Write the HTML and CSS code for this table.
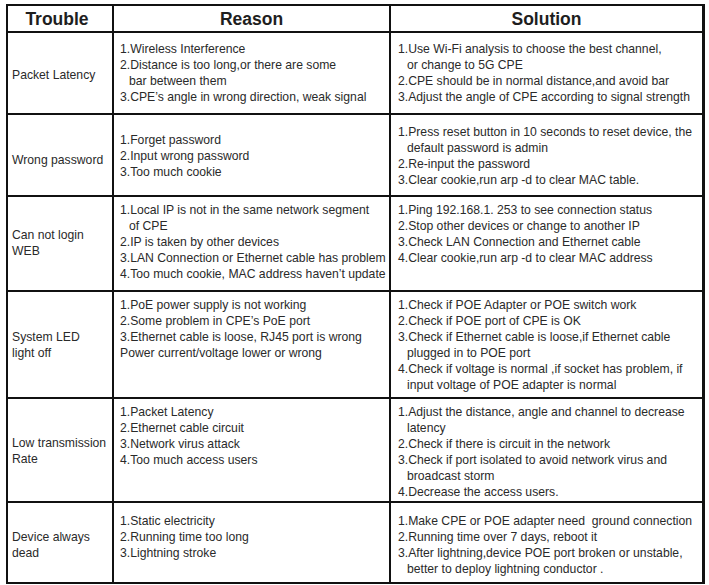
FILE: index.html
```html
<!DOCTYPE html>
<html>
<head>
<meta charset="utf-8">
<link rel="stylesheet" href="styles.css">
</head>
<body>
<div class="table">
  <div class="cell head head-first">Trouble</div>
  <div class="cell head">Reason</div>
  <div class="cell head">Solution</div>

  <div class="cell trouble t1">Packet Latency</div>
  <div class="cell text r1 c2">
    <div>1.Wireless Interference</div>
    <div>2.Distance is too long,or there are some</div>
    <div class="ind">bar between them</div>
    <div>3.CPE’s angle in wrong direction, weak signal</div>
  </div>
  <div class="cell text r1 c3">
    <div>1.Use Wi-Fi analysis to choose the best channel,</div>
    <div class="ind">or change to 5G CPE</div>
    <div>2.CPE should be in normal distance,and avoid bar</div>
    <div>3.Adjust the angle of CPE according to signal strength</div>
  </div>

  <div class="cell trouble t2">Wrong password</div>
  <div class="cell text mid c2">
    <div>1.Forget password</div>
    <div>2.Input wrong password</div>
    <div>3.Too much cookie</div>
  </div>
  <div class="cell text r2 c3">
    <div>1.Press reset button in 10 seconds to reset device, the</div>
    <div class="ind">default password is admin</div>
    <div>2.Re-input the password</div>
    <div>3.Clear cookie,run arp -d to clear MAC table.</div>
  </div>

  <div class="cell trouble t3">Can not login<br>WEB</div>
  <div class="cell text r3 c2">
    <div>1.Local IP is not in the same network segment</div>
    <div class="ind">of CPE</div>
    <div>2.IP is taken by other devices</div>
    <div>3.LAN Connection or Ethernet cable has problem</div>
    <div>4.Too much cookie, MAC address haven’t update</div>
  </div>
  <div class="cell text r3 c3">
    <div>1.Ping 192.168.1. 253 to see connection status</div>
    <div>2.Stop other devices or change to another IP</div>
    <div>3.Check LAN Connection and Ethernet cable</div>
    <div>4.Clear cookie,run arp -d to clear MAC address</div>
  </div>

  <div class="cell trouble t4">System LED<br>light off</div>
  <div class="cell text r4 c2">
    <div>1.PoE power supply is not working</div>
    <div>2.Some problem in CPE’s PoE port</div>
    <div>3.Ethernet cable is loose, RJ45 port is wrong</div>
    <div>Power current/voltage lower or wrong</div>
  </div>
  <div class="cell text r4 c3">
    <div>1.Check if POE Adapter or POE switch work</div>
    <div>2.Check if POE port of CPE is OK</div>
    <div>3.Check if Ethernet cable is loose,if Ethernet cable</div>
    <div class="ind">plugged in to POE port</div>
    <div>4.Check if voltage is normal ,if socket has problem, if</div>
    <div class="ind">input voltage of POE adapter is normal</div>
  </div>

  <div class="cell trouble t5">Low transmission<br>Rate</div>
  <div class="cell text r5 c2">
    <div>1.Packet Latency</div>
    <div>2.Ethernet cable circuit</div>
    <div>3.Network virus attack</div>
    <div>4.Too much access users</div>
  </div>
  <div class="cell text r5 c3">
    <div>1.Adjust the distance, angle and channel to decrease</div>
    <div class="ind">latency</div>
    <div>2.Check if there is circuit in the network</div>
    <div>3.Check if port isolated to avoid network virus and</div>
    <div class="ind">broadcast storm</div>
    <div>4.Decrease the access users.</div>
  </div>

  <div class="cell trouble t6">Device always<br>dead</div>
  <div class="cell text r6 c2">
    <div>1.Static electricity</div>
    <div>2.Running time too long</div>
    <div>3.Lightning stroke</div>
  </div>
  <div class="cell text r6 c3">
    <div>1.Make CPE or POE adapter need&nbsp; ground connection</div>
    <div>2.Running time over 7 days, reboot it</div>
    <div>3.After lightning,device POE port broken or unstable,</div>
    <div class="ind">better to deploy lightning conductor .</div>
  </div>
</div>
</body>
</html>
```
FILE: styles.css
```css
html, body {
  margin: 0;
  padding: 0;
  background: #ffffff;
}

body {
  font-family: "Liberation Sans", Arial, Helvetica, sans-serif;
  color: #2a2a2a;
}

.table {
  display: grid;
  grid-template-columns: 104px 275px 311px;
  grid-template-rows: 25px 80px 80px 93px 105px 102px 79px;
  gap: 2px;
  background: #111111;
  padding: 2px 3px 2px 2px;
  width: max-content;
  margin: 4px 0 0 6px;
}

.cell {
  background: #ffffff;
  font-size: 12.2px;
  line-height: 16px;
  white-space: nowrap;
}

.head {
  display: flex;
  align-items: center;
  justify-content: center;
  font-size: 17.5px;
  font-weight: bold;
  color: #1e1e1e;
  line-height: 20px;
  padding-top: 1px;
}

.head-first {
  padding-right: 6px;
}

.trouble {
  display: flex;
  align-items: center;
  padding-left: 4px;
}

.t1 { padding-top: 4px; }
.t2 { padding-top: 10px; }
.t3 { padding-bottom: 2px; }
.t4 { padding-top: 1px; }
.t5 { padding-top: 2px; }
.t6 { padding-top: 4px; }

.text {
  display: flex;
  flex-direction: column;
}

.c2 {
  padding-left: 6px;
}

.c3 {
  padding-left: 7px;
}

.ind {
  padding-left: 9px;
}

.mid {
  justify-content: center;
  padding-top: 2px;
}

.r1 { padding-top: 8px; }
.r2 { padding-top: 9px; }
.r3 { padding-top: 5px; }
.r4 { padding-top: 5px; }
.r5 { padding-top: 5px; }
.r6 { padding-top: 10px; }
```
